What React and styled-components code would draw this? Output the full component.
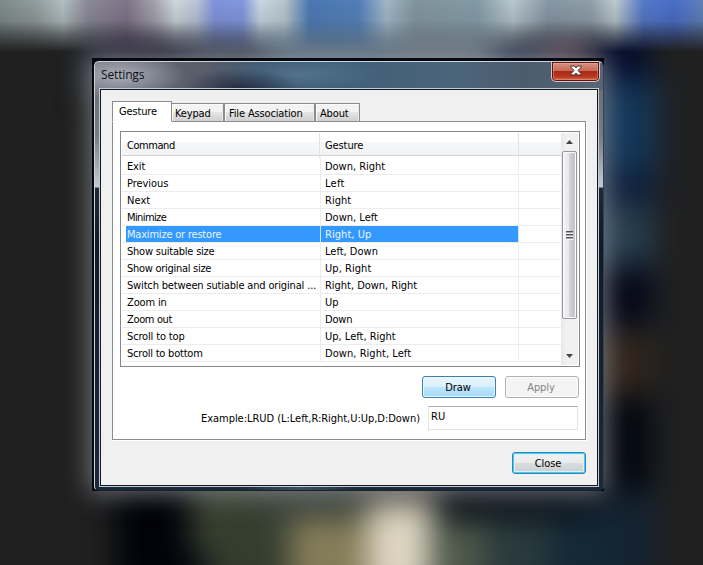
import React from "react";
import styled, { createGlobalStyle, css } from "styled-components";

const Global = createGlobalStyle`
  * { box-sizing: border-box; }
  html, body { margin: 0; padding: 0; background: #202020; overflow: hidden; }
`;

const Page = styled.div`
  position: relative;
  width: 703px;
  height: 565px;
  overflow: hidden;
  background: #202020;
  padding: 58px 0 0 92px;
  font-family: Tahoma, "DejaVu Sans Condensed", "DejaVu Sans", sans-serif;
  font-stretch: condensed;
  font-size: 11px;
  line-height: 17px;
  letter-spacing: -0.4px;
  color: #000;
`;

const Wallpaper = styled.svg`
  position: absolute;
  inset: 0;
`;

const Dialog = styled.div`
  position: relative;
  width: 512px;
  height: 433px;
  padding: 3px 0 0 2px;
  background: #05080f;
  box-shadow: 0 0 24px 2px rgba(178, 182, 190, 0.6);
`;

const Glass = styled.div`
  width: 510px;
  height: 430px;
  padding: 0 4px 4px 4px;
  border: 1px solid #ccd3da;
  border-right-color: #33404e;
  border-bottom-color: #17222e;
  border-radius: 5px 6px 5px 5px;
  background:
    radial-gradient(ellipse 66px 24px at 24px 13px, rgba(185, 188, 197, 0.85), rgba(165, 168, 177, 0.5) 55%, transparent),
    radial-gradient(ellipse 60px 22px at 145px 28px, rgba(25, 31, 49, 0.8), transparent),
    radial-gradient(ellipse 80px 18px at 205px 12px, rgba(114, 146, 173, 0.4), transparent),
    linear-gradient(90deg, #696d78 0, #595d6a 22%, #3c5872 33%, #416079 52%, #4c647a 72%, #4c5c6e 85%, #586575) 0 0 / 100% 28px no-repeat,
    radial-gradient(ellipse 60px 7px at 205px 426px, #40525d, transparent),
    linear-gradient(#646a70 0, #777d83 75px, #c6ccd3 125px, #1e2a36 126px, #101b28 180px, #1b2936 100%);
`;

const TitleBar = styled.header`
  display: flex;
  justify-content: space-between;
  align-items: flex-start;
  height: 26px;
  padding-left: 2px;
`;

const Title = styled.h1`
  margin: 4px 0 0;
  font: 400 12px/18px "Segoe UI", "Open Sans", sans-serif;
  letter-spacing: -0.15px;
  color: #0c0e12;
`;

const CloseBox = styled.button`
  width: 49px;
  height: 20px;
  margin-right: -1px;
  padding: 0 0 2px 1px;
  display: grid;
  place-items: center;
  border: 1px solid #d6c6c9;
  border-top: 0;
  border-radius: 0 0 5px 5px;
  box-shadow: inset 0 0 0 1px #5c1714, inset 0 0 0 2px rgba(255, 180, 160, 0.4);
  background: linear-gradient(#d79686 0, #c76b59 45%, #a62a18 48%, #b8341c 75%, #d8755a);
`;

const Client = styled.main`
  height: 399px;
  border: 1px solid #c4cbd1;
  box-shadow: inset 0 0 0 1px #0e1826;
  background: #f0f0f0;
  padding: 12px 13px 0 12px;
`;

const Tabs = styled.nav`
  position: relative;
  display: flex;
  align-items: flex-end;
  height: 21px;
  margin-bottom: -1px;
`;

const Tab = styled.div`
  width: ${(p) => p.$width}px;
  height: 19px;
  padding: 1px 0 0 ${(p) => (p.$first ? 3 : 4)}px;
  line-height: 18px;
  white-space: nowrap;
  letter-spacing: ${(p) => p.$track ?? -0.15}px;
  border: 1px solid #8b8c90;
  border-left-width: ${(p) => (p.$first ? 0 : 1)}px;
  box-shadow: inset 1px 1px 0 #fbfbfb, inset -1px 0 0 #e9e9e9;
  background: linear-gradient(#f3f3f3 45%, #e4e4e4 50%, #d0d0d0);
  ${(p) =>
    p.$active &&
    css`
      height: 21px;
      padding: 0 0 0 6px;
      line-height: 20px;
      border-left-width: 1px;
      border-bottom-color: #fff;
      box-shadow: none;
      background: #fff;
    `}
`;

const Panel = styled.section`
  width: 474px;
  height: 319px;
  border: 1px solid #8b8c90;
  box-shadow: 1px 1px 0 #fff;
  background: #fff;
  padding: 9px 6px 0 7px;
`;

const List = styled.div`
  display: flex;
  width: 460px;
  height: 236px;
  padding: 1px;
  border: 1px solid #828790;
  background: #fff;
`;

const Grid = styled.div`
  width: 440px;
  height: 232px;
  overflow: hidden;
`;

const HeaderRow = styled.div`
  display: grid;
  grid-template-columns: 198px 199px 1fr;
  height: 23px;
  border-bottom: 1px solid #d5d5d5;
  background: linear-gradient(#fff 42%, #f7f8fa 43%, #f1f2f4);
  line-height: 25px;
`;

const HeaderCell = styled.div`
  padding-left: ${(p) => p.$indent}px;
  letter-spacing: ${(p) => p.$track ?? -0.4}px;
  border-right: ${(p) => (p.$last ? "0" : "1px solid #dfe3e8")};
`;

const Row = styled.div`
  display: grid;
  grid-template-columns: 4px 195px 198px 1fr;
  height: 17px;
  line-height: 17px;
  border-bottom: 1px solid #ececec;
  &:first-of-type {
    height: 18px;
    line-height: 19px;
  }
`;

const Cell = styled.div`
  height: 16px;
  padding-left: ${(p) => p.$indent}px;
  border-right: 1px solid ${(p) => (p.$on ? "#cfe5fc" : "#ececec")};
  white-space: nowrap;
  letter-spacing: ${(p) => p.$track}px;
  color: ${(p) => (p.$on ? "#e9f5ff" : "inherit")};
  background: ${(p) => (p.$on ? "#3399ff" : "transparent")};
`;

const Rows = styled.div`
  padding-top: 1px;
`;

const ScrollBar = styled.div`
  display: flex;
  flex-direction: column;
  align-items: center;
  width: 17px;
  height: 232px;
  background: linear-gradient(90deg, #e8e8e8, #f1f1f1 30%, #f0f0f0);
`;

const ArrowBox = styled.div`
  width: 17px;
  height: 18px;
  display: grid;
  place-items: center;
`;

const Track = styled.div`
  flex: 1;
`;

const Thumb = styled.div`
  width: 15px;
  height: 168px;
  display: grid;
  place-items: center;
  border: 1px solid #96979b;
  border-radius: 2px;
  box-shadow: inset 0 0 0 1px #fafafa;
  background: linear-gradient(90deg, #f4f4f4 0, #e8e8ea 45%, #d1d1d5 52%, #c1c1c7 85%, #dedee0);
`;

const Actions = styled.div`
  display: flex;
  justify-content: flex-end;
  gap: 9px;
  margin-top: 9px;
`;

const variants = {
  hot: css`
    border-color: #3c7fb1;
    box-shadow: inset 0 0 0 1px #e9f8ff;
    background: linear-gradient(#eaf6fd 0, #d9f0fc 48%, #bee6fd 52%, #a7d9f5);
  `,
  disabled: css`
    border-color: #adb2b5;
    box-shadow: inset 0 0 0 1px #fcfcfc;
    background: #f4f4f4;
    color: #838383;
  `,
  focus: css`
    border-color: #3c7fb1;
    box-shadow: inset 0 0 0 1px #41cdf4, inset 0 0 0 2px #d4f3fb;
    background: linear-gradient(#f2f2f2 0, #ebebeb 48%, #d9dddf 52%, #c9cfd2);
  `,
};

const Button = styled.button`
  width: 74px;
  height: 22px;
  padding: 1px 2px 0 0;
  border: 1px solid;
  border-radius: 3px;
  font: inherit;
  line-height: 19px;
  letter-spacing: -0.1px;
  color: #000;
  ${(p) => variants[p.$kind]}
`;

const Field = styled.label`
  display: flex;
  justify-content: flex-end;
  gap: 8px;
  margin: 8px 1px 0 0;
  line-height: 25px;
  white-space: nowrap;
`;

const Hint = styled.span`
  letter-spacing: -0.03px;
`;

const Input = styled.input`
  width: 150px;
  height: 24px;
  padding: 0 3px 4px 2px;
  border: 1px solid #e2e3ea;
  border-top-color: #abadb3;
  outline: 0;
  font: inherit;
  letter-spacing: 0;
  color: #000;
  background: #fff;
`;

const Footer = styled.footer`
  display: flex;
  justify-content: flex-end;
  width: 474px;
  margin-top: 12px;
`;

/* command, gesture, tracking of the command, tracking of the gesture */
const rows = [
  ["Exit", "Down, Right", -0.15, -0.03],
  ["Previous", "Left", -0.05, 0.3],
  ["Next", "Right", 0.05, 0],
  ["Minimize", "Down, Left", -0.6, 0],
  ["Maximize or restore", "Right, Up", -0.2, 0.05],
  ["Show suitable size", "Left, Down", -0.22, 0],
  ["Show original size", "Up, Right", -0.28, 0.05],
  ["Switch between sutiable and original ...", "Right, Down, Right", -0.16, -0.03],
  ["Zoom in", "Up", -0.15, 0],
  ["Zoom out", "Down", -0.35, -0.15],
  ["Scroll to top", "Up, Left, Right", -0.15, 0],
  ["Scroll to bottom", "Down, Right, Left", -0.22, 0.05],
];

const topBand = [
  [0, "#7f8b8b"], [0.05, "#929d9e"], [0.09, "#b3c0c2"], [0.125, "#8c8b98"], [0.18, "#817589"],
  [0.22, "#a5a3ae"], [0.25, "#d0d9df"], [0.28, "#bac4d6"], [0.305, "#8194dd"], [0.345, "#8298e0"],
  [0.37, "#cbd8e3"], [0.405, "#b8c7cd"], [0.44, "#4b78b3"], [0.51, "#527fb9"], [0.55, "#a2b8c8"],
  [0.59, "#82959f"], [0.68, "#839ba6"], [0.73, "#bac9ce"], [0.78, "#8798a6"], [0.84, "#90a0ab"],
  [0.875, "#becbd1"], [0.915, "#5679ca"], [0.96, "#496fcb"], [1, "#6282bb"],
];

const patches = [
  [85, 10, 400, 85, "#3a4250"],
  [95, 10, 90, 70, "#252233"], [265, 10, 140, 80, "#54697a"],
  [395, 10, 110, 80, "#616d78"], [495, 30, 85, 60, "#2d374c"], [548, 42, 58, 40, "#704850"],
  [560, 60, 95, 530, "#101b29"],
  [590, 30, 58, 60, "#050d2c"], [590, 80, 67, 95, "#14375a"], [590, 170, 67, 35, "#10203c"],
  [590, 205, 63, 58, "#293f50"], [590, 270, 58, 55, "#060718"], [590, 330, 62, 65, "#33261d"],
  [590, 395, 60, 95, "#05080f"], [590, 490, 65, 100, "#142331"],
  [115, 470, 480, 120, "#20292a"],
  [115, 480, 85, 110, "#010309"], [190, 480, 75, 70, "#3a4232"], [215, 515, 80, 80, "#353d2d"],
  [265, 475, 110, 60, "#39413a"], [290, 518, 95, 80, "#857d59"], [365, 475, 80, 50, "#4f4b40"],
  [368, 504, 70, 90, "#ded6c3"], [430, 518, 65, 75, "#4f594b"], [435, 475, 160, 45, "#0a1017"],
  [485, 518, 75, 75, "#293a3d"], [550, 515, 60, 75, "#142836"],
];

function Backdrop() {
  return (
    <Wallpaper width="703" height="565" viewBox="0 0 703 565" aria-hidden="true">
      <defs>
        <linearGradient id="band">
          {topBand.map(([o, c]) => <stop key={o} offset={o} stopColor={c} />)}
        </linearGradient>
        <linearGradient id="fade" x2="0" y2="1">
          <stop offset="0" stopColor="#fff" />
          <stop offset="0.4" stopColor="#ddd" />
          <stop offset="0.7" stopColor="#666" />
          <stop offset="1" stopColor="#000" />
        </linearGradient>
        <mask id="top"><rect width="703" height="52" fill="url(#fade)" /></mask>
        <filter id="soft" x="-20%" y="-20%" width="140%" height="140%" colorInterpolationFilters="sRGB">
          <feGaussianBlur stdDeviation="15" />
        </filter>
      </defs>
      <g filter="url(#soft)">
        {patches.map(([x, y, w, h, c], i) => <rect key={i} x={x} y={y} width={w} height={h} fill={c} />)}
      </g>
      <rect width="703" height="52" fill="url(#band)" mask="url(#top)" />
    </Wallpaper>
  );
}

export default function App() {
  return (
    <Page>
      <Global />
      <Backdrop />
      <Dialog role="dialog">
        <Glass>
          <TitleBar>
            <Title>Settings</Title>
            <CloseBox aria-label="Close window">
              <svg width="12" height="11" viewBox="0 0 12 11">
                <path d="M1 1h3.6L6 3 7.4 1H11v1.3L8 5.5l3 3.2V10H7.4L6 8l-1.4 2H1V8.7l3-3.2-3-3.2z" fill="#fff" stroke="#4b2b30" strokeWidth="1" />
              </svg>
            </CloseBox>
          </TitleBar>
          <Client>
            <Tabs>
              <Tab $active $width={60}>Gesture</Tab>
              <Tab $first $width={52}>Keypad</Tab>
              <Tab $width={91}>File Association</Tab>
              <Tab $width={45}>About</Tab>
            </Tabs>
            <Panel>
              <List>
                <Grid>
                  <HeaderRow>
                    <HeaderCell $indent={5} $track={-0.45}>Command</HeaderCell>
                    <HeaderCell $indent={5} $track={-0.1}>Gesture</HeaderCell>
                    <HeaderCell $last />
                  </HeaderRow>
                  <Rows>
                    {rows.map(([command, gesture, a, b], i) => (
                      <Row key={command}>
                        <span />
                        <Cell $indent={1} $track={a} $on={i === 4}>{command}</Cell>
                        <Cell $indent={4} $track={b} $on={i === 4}>{gesture}</Cell>
                      </Row>
                    ))}
                  </Rows>
                </Grid>
                <ScrollBar>
                  <ArrowBox>
                    <svg width="7" height="4" viewBox="0 0 7 4"><path d="M0 4 3.5 0 7 4z" fill="#444" /></svg>
                  </ArrowBox>
                  <Thumb>
                    <svg width="7" height="9" viewBox="0 0 7 9" shapeRendering="crispEdges">
                      <path d="M0 .5h7M0 3.5h7M0 6.5h7" stroke="#50545a" />
                      <path d="M0 1.5h7M0 4.5h7M0 7.5h7" stroke="#a5a8ad" />
                      <path d="M0 2.5h7M0 5.5h7M0 8.5h7" stroke="#f4f4f4" />
                    </svg>
                  </Thumb>
                  <Track />
                  <ArrowBox>
                    <svg width="7" height="4" viewBox="0 0 7 4"><path d="M0 0h7L3.5 4z" fill="#444" /></svg>
                  </ArrowBox>
                </ScrollBar>
              </List>
              <Actions>
                <Button $kind="hot">Draw</Button>
                <Button $kind="disabled" disabled>Apply</Button>
              </Actions>
              <Field>
                <Hint>Example:LRUD (L:Left,R:Right,U:Up,D:Down)</Hint>
                <Input defaultValue="RU" />
              </Field>
            </Panel>
            <Footer>
              <Button $kind="focus">Close</Button>
            </Footer>
          </Client>
        </Glass>
      </Dialog>
    </Page>
  );
}
